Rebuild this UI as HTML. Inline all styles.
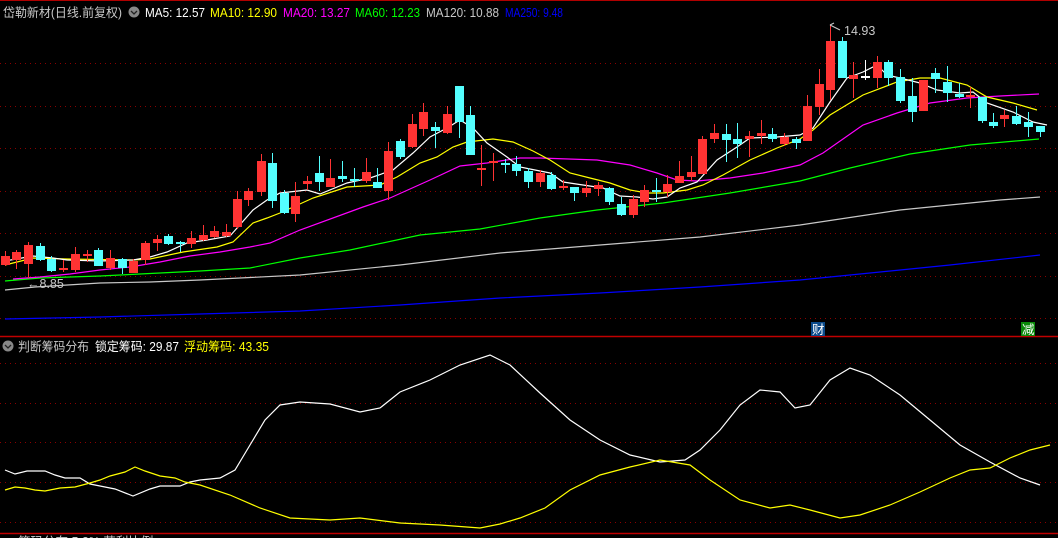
<!DOCTYPE html>
<html><head><meta charset="utf-8"><style>
html,body{margin:0;padding:0;background:#000;width:1058px;height:538px;overflow:hidden}
svg{display:block}
text{font-family:"Liberation Sans","Noto Sans CJK SC",sans-serif;font-size:12.5px}
.r{fill:#ff3333;stroke:#ff3333}
.c{fill:#54ffff;stroke:#54ffff}
.w{fill:#fff;stroke:#fff}
.g{stroke:#8a0000;stroke-dasharray:1 4;stroke-width:1}
polyline{fill:none;stroke-width:1.2}
</style></head><body>
<svg width="1058" height="538" viewBox="0 0 1058 538" xmlns="http://www.w3.org/2000/svg">
<rect width="1058" height="538" fill="#000"/>
<line x1="0" y1="0.5" x2="1058" y2="0.5" stroke="#b00000"/>
<line x1="0" y1="336.5" x2="1058" y2="336.5" stroke="#c00000" stroke-width="1.5"/>
<line x1="0" y1="533.5" x2="1058" y2="533.5" stroke="#c00000" stroke-width="1.5"/>
<g>
<line class="g" x1="0" y1="63.5" x2="1058" y2="63.5"/><line class="g" x1="0" y1="106.5" x2="1058" y2="106.5"/>
<line class="g" x1="0" y1="148.5" x2="1058" y2="148.5"/><line class="g" x1="0" y1="191.5" x2="1058" y2="191.5"/>
<line class="g" x1="0" y1="233.5" x2="1058" y2="233.5"/><line class="g" x1="0" y1="276.5" x2="1058" y2="276.5"/>
<line class="g" x1="0" y1="318.5" x2="1058" y2="318.5"/>
<line class="g" x1="0" y1="363.5" x2="1058" y2="363.5"/><line class="g" x1="0" y1="403.5" x2="1058" y2="403.5"/>
<line class="g" x1="0" y1="442.5" x2="1058" y2="442.5"/><line class="g" x1="0" y1="482.5" x2="1058" y2="482.5"/>
<line class="g" x1="0" y1="522.5" x2="1058" y2="522.5"/>
</g>
<polyline stroke="#0000ff" points="5,319 100,317 200,314 300,311 400,305 500,298 600,293 700,287 800,280 850,275 950,265 1040,255"/>
<polyline stroke="#c8c8c8" points="5,290 35,287 100,283 150,282 200,280 300,275 400,265 500,253 600,245 700,237 800,225 900,210 1000,200 1040,197"/>
<polyline stroke="#00ff00" points="5,281 40,278 70,277 100,276 140,274 200,271 250,268 300,258 350,250 420,235 480,229 540,218 597,210 663,203 730,193 800,181 850,168 910,154 970,145 1039,139"/>
<polyline stroke="#ff00ff" points="13,279 40,277 70,274 100,270 130,267 160,262 190,256 220,252 250,247 270,243 300,230 363,207 390,198 430,180 460,166 487,163 520,158 540,158 597,160 630,165 657,173 677,180 697,181 730,178 763,173 800,165 823,153 863,125 897,113 930,103 967,98 1000,96 1039,94"/>
<polyline stroke="#ffff00" points="5,265 33,258 67,259 133,260 150,259 183,252 217,247 233,242 253,223 267,218 280,213 313,198 347,187 380,185 397,177 420,163 437,157 453,147 467,142 493,139 513,142 533,151 550,160 570,173 590,178 610,183 630,190 647,193 663,193 687,190 703,185 723,175 750,160 777,148 800,139 813,130 830,115 863,95 897,82 920,78 940,78 967,85 987,97 1013,103 1037,110"/>
<polyline stroke="#ffffff" points="5,261 33,256 53,258 67,260 100,261 133,260 150,257 167,252 187,243 207,240 230,236 253,210 267,200 280,193 307,190 320,194 347,183 370,178 393,170 413,153 430,137 447,128 460,120 473,128 487,143 507,157 520,167 530,169 550,173 563,182 583,185 603,188 620,196 637,197 653,199 667,197 680,188 697,182 717,160 737,147 750,138 777,137 800,135 813,128 830,102 847,78 863,72 877,65 887,75 900,78 920,83 937,90 960,93 973,92 987,103 1013,112 1033,122 1047,125"/>
<g stroke-width="1">
<line class="r" x1="5.5" y1="251" x2="5.5" y2="266"/><rect class="r" x="1.5" y="256.5" width="8" height="8"/>
<line class="r" x1="16.5" y1="250" x2="16.5" y2="269"/><rect class="r" x="12.5" y="252.5" width="8" height="7"/>
<line class="r" x1="28.5" y1="242" x2="28.5" y2="278"/><rect class="r" x="24.5" y="245.5" width="8" height="18"/>
<line class="c" x1="40.5" y1="243" x2="40.5" y2="261"/><rect class="c" x="36.5" y="246.5" width="8" height="13"/>
<line class="c" x1="51.5" y1="256" x2="51.5" y2="272"/><rect class="c" x="47.5" y="259.5" width="8" height="11"/>
<line class="r" x1="63.5" y1="260" x2="63.5" y2="272"/><rect class="r" x="59.5" y="268.5" width="8" height="1"/>
<line class="r" x1="75.5" y1="247" x2="75.5" y2="272"/><rect class="r" x="71.5" y="254.5" width="8" height="15"/>
<line class="r" x1="87.5" y1="250" x2="87.5" y2="262"/><rect class="r" x="83.5" y="254.5" width="8" height="1"/>
<line class="c" x1="98.5" y1="248" x2="98.5" y2="266"/><rect class="c" x="94.5" y="250.5" width="8" height="15"/>
<line class="r" x1="110.5" y1="250" x2="110.5" y2="270"/><rect class="r" x="106.5" y="258.5" width="8" height="9"/>
<line class="c" x1="122.5" y1="258" x2="122.5" y2="274"/><rect class="c" x="118.5" y="259.5" width="8" height="8"/>
<line class="r" x1="133.5" y1="259" x2="133.5" y2="273"/><rect class="r" x="129.5" y="261.5" width="8" height="11"/>
<line class="r" x1="145.5" y1="241" x2="145.5" y2="265"/><rect class="r" x="141.5" y="243.5" width="8" height="16"/>
<line class="r" x1="157.5" y1="235" x2="157.5" y2="251"/><rect class="r" x="153.5" y="239.5" width="8" height="3"/>
<line class="c" x1="168.5" y1="234" x2="168.5" y2="245"/><rect class="c" x="164.5" y="236.5" width="8" height="7"/>
<line class="c" x1="180.5" y1="241" x2="180.5" y2="252"/><rect class="c" x="176.5" y="242.5" width="8" height="1"/>
<line class="r" x1="191.5" y1="231" x2="191.5" y2="248"/><rect class="r" x="187.5" y="238.5" width="8" height="5"/>
<line class="r" x1="203.5" y1="225" x2="203.5" y2="241"/><rect class="r" x="199.5" y="235.5" width="8" height="4"/>
<line class="r" x1="214.5" y1="226" x2="214.5" y2="238"/><rect class="r" x="210.5" y="231.5" width="8" height="5"/>
<line class="r" x1="226.5" y1="224" x2="226.5" y2="237"/><rect class="r" x="222.5" y="232.5" width="8" height="3"/>
<line class="r" x1="237.5" y1="191" x2="237.5" y2="229"/><rect class="r" x="233.5" y="199.5" width="8" height="27"/>
<line class="r" x1="248.5" y1="188" x2="248.5" y2="206"/><rect class="r" x="244.5" y="191.5" width="8" height="8"/>
<line class="r" x1="261.5" y1="154" x2="261.5" y2="196"/><rect class="r" x="257.5" y="161.5" width="8" height="30"/>
<line class="c" x1="272.5" y1="153" x2="272.5" y2="208"/><rect class="c" x="268.5" y="163.5" width="8" height="37"/>
<line class="c" x1="284.5" y1="190" x2="284.5" y2="214"/><rect class="c" x="280.5" y="193.5" width="8" height="19"/>
<line class="r" x1="295.5" y1="182" x2="295.5" y2="222"/><rect class="r" x="291.5" y="196.5" width="8" height="17"/>
<line class="r" x1="307.5" y1="176" x2="307.5" y2="190"/><rect class="r" x="303.5" y="181.5" width="8" height="2"/>
<line class="c" x1="319.5" y1="156" x2="319.5" y2="191"/><rect class="c" x="315.5" y="173.5" width="8" height="8"/>
<line class="r" x1="330.5" y1="159" x2="330.5" y2="187"/><rect class="r" x="326.5" y="178.5" width="8" height="8"/>
<line class="c" x1="342.5" y1="161" x2="342.5" y2="182"/><rect class="c" x="338.5" y="176.5" width="8" height="2"/>
<line class="c" x1="354.5" y1="168" x2="354.5" y2="187"/><rect class="c" x="350.5" y="179.5" width="8" height="1"/>
<line class="r" x1="366.5" y1="158" x2="366.5" y2="183"/><rect class="r" x="362.5" y="172.5" width="8" height="8"/>
<line class="c" x1="377.5" y1="168" x2="377.5" y2="188"/><rect class="c" x="373.5" y="182.5" width="8" height="5"/>
<line class="r" x1="388.5" y1="142" x2="388.5" y2="200"/><rect class="r" x="384.5" y="151.5" width="8" height="39"/>
<line class="c" x1="400.5" y1="139" x2="400.5" y2="159"/><rect class="c" x="396.5" y="141.5" width="8" height="15"/>
<line class="r" x1="412.5" y1="114" x2="412.5" y2="148"/><rect class="r" x="408.5" y="124.5" width="8" height="22"/>
<line class="r" x1="423.5" y1="103" x2="423.5" y2="136"/><rect class="r" x="419.5" y="112.5" width="8" height="16"/>
<line class="c" x1="435.5" y1="122" x2="435.5" y2="148"/><rect class="c" x="431.5" y="127.5" width="8" height="3"/>
<line class="r" x1="447.5" y1="106" x2="447.5" y2="134"/><rect class="r" x="443.5" y="114.5" width="8" height="18"/>
<line class="c" x1="459.5" y1="86" x2="459.5" y2="138"/><rect class="c" x="455.5" y="86.5" width="8" height="35"/>
<line class="c" x1="470.5" y1="106" x2="470.5" y2="154"/><rect class="c" x="466.5" y="115.5" width="8" height="39"/>
<line class="r" x1="481.5" y1="145" x2="481.5" y2="186"/><rect class="r" x="477.5" y="168.5" width="8" height="1"/>
<line class="r" x1="493.5" y1="153" x2="493.5" y2="181"/><rect class="r" x="489.5" y="161.5" width="8" height="1"/>
<line class="c" x1="505.5" y1="159" x2="505.5" y2="173"/><rect class="c" x="501.5" y="163.5" width="8" height="1"/>
<line class="c" x1="516.5" y1="156" x2="516.5" y2="176"/><rect class="c" x="512.5" y="164.5" width="8" height="6"/>
<line class="c" x1="528.5" y1="168" x2="528.5" y2="188"/><rect class="c" x="524.5" y="171.5" width="8" height="10"/>
<line class="r" x1="540.5" y1="170" x2="540.5" y2="187"/><rect class="r" x="536.5" y="173.5" width="8" height="8"/>
<line class="c" x1="551.5" y1="172" x2="551.5" y2="190"/><rect class="c" x="547.5" y="175.5" width="8" height="13"/>
<line class="r" x1="563.5" y1="180" x2="563.5" y2="190"/><rect class="r" x="559.5" y="186.5" width="8" height="1"/>
<line class="c" x1="574.5" y1="187" x2="574.5" y2="201"/><rect class="c" x="570.5" y="187.5" width="8" height="5"/>
<line class="r" x1="586.5" y1="181" x2="586.5" y2="197"/><rect class="r" x="582.5" y="188.5" width="8" height="4"/>
<line class="r" x1="598.5" y1="182" x2="598.5" y2="196"/><rect class="r" x="594.5" y="185.5" width="8" height="3"/>
<line class="c" x1="609.5" y1="187" x2="609.5" y2="205"/><rect class="c" x="605.5" y="188.5" width="8" height="13"/>
<line class="c" x1="621.5" y1="197" x2="621.5" y2="216"/><rect class="c" x="617.5" y="204.5" width="8" height="10"/>
<line class="r" x1="633.5" y1="195" x2="633.5" y2="218"/><rect class="r" x="629.5" y="199.5" width="8" height="15"/>
<line class="r" x1="644.5" y1="185" x2="644.5" y2="207"/><rect class="r" x="640.5" y="190.5" width="8" height="11"/>
<line class="c" x1="656.5" y1="178" x2="656.5" y2="202"/><rect class="c" x="652.5" y="190.5" width="8" height="1"/>
<line class="r" x1="667.5" y1="175" x2="667.5" y2="197"/><rect class="r" x="663.5" y="184.5" width="8" height="7"/>
<line class="r" x1="679.5" y1="161" x2="679.5" y2="183"/><rect class="r" x="675.5" y="176.5" width="8" height="6"/>
<line class="r" x1="691.5" y1="156" x2="691.5" y2="181"/><rect class="r" x="687.5" y="172.5" width="8" height="4"/>
<line class="r" x1="702.5" y1="136" x2="702.5" y2="173"/><rect class="r" x="698.5" y="139.5" width="8" height="34"/>
<line class="r" x1="714.5" y1="124" x2="714.5" y2="143"/><rect class="r" x="710.5" y="133.5" width="8" height="5"/>
<line class="c" x1="726.5" y1="124" x2="726.5" y2="162"/><rect class="c" x="722.5" y="134.5" width="8" height="5"/>
<line class="c" x1="737.5" y1="123" x2="737.5" y2="158"/><rect class="c" x="733.5" y="139.5" width="8" height="4"/>
<line class="r" x1="749.5" y1="131" x2="749.5" y2="157"/><rect class="r" x="745.5" y="136.5" width="8" height="2"/>
<line class="r" x1="761.5" y1="120" x2="761.5" y2="144"/><rect class="r" x="757.5" y="133.5" width="8" height="2"/>
<line class="c" x1="772.5" y1="128" x2="772.5" y2="142"/><rect class="c" x="768.5" y="134.5" width="8" height="4"/>
<line class="r" x1="784.5" y1="133" x2="784.5" y2="146"/><rect class="r" x="780.5" y="137.5" width="8" height="6"/>
<line class="c" x1="796.5" y1="137" x2="796.5" y2="149"/><rect class="c" x="792.5" y="139.5" width="8" height="3"/>
<line class="r" x1="807.5" y1="95" x2="807.5" y2="140"/><rect class="r" x="803.5" y="106.5" width="8" height="34"/>
<line class="r" x1="819.5" y1="69" x2="819.5" y2="115"/><rect class="r" x="815.5" y="84.5" width="8" height="22"/>
<line class="r" x1="830.5" y1="25" x2="830.5" y2="100"/><rect class="r" x="826.5" y="41.5" width="8" height="48"/>
<line class="c" x1="842.5" y1="37" x2="842.5" y2="78"/><rect class="c" x="838.5" y="41.5" width="8" height="36"/>
<line class="r" x1="853.5" y1="62" x2="853.5" y2="98"/><rect class="r" x="849.5" y="75.5" width="8" height="3"/>
<line class="w" x1="865.5" y1="60" x2="865.5" y2="80"/><rect class="w" x="861.5" y="76.5" width="8" height="1"/>
<line class="r" x1="877.5" y1="56" x2="877.5" y2="88"/><rect class="r" x="873.5" y="62.5" width="8" height="15"/>
<line class="c" x1="888.5" y1="60" x2="888.5" y2="86"/><rect class="c" x="884.5" y="62.5" width="8" height="15"/>
<line class="c" x1="900.5" y1="69" x2="900.5" y2="103"/><rect class="c" x="896.5" y="77.5" width="8" height="23"/>
<line class="c" x1="912.5" y1="78" x2="912.5" y2="122"/><rect class="c" x="908.5" y="96.5" width="8" height="15"/>
<line class="r" x1="923.5" y1="80" x2="923.5" y2="111"/><rect class="r" x="919.5" y="80.5" width="8" height="30"/>
<line class="c" x1="935.5" y1="68" x2="935.5" y2="93"/><rect class="c" x="931.5" y="73.5" width="8" height="5"/>
<line class="c" x1="947.5" y1="66" x2="947.5" y2="102"/><rect class="c" x="943.5" y="82.5" width="8" height="10"/>
<line class="c" x1="959.5" y1="83" x2="959.5" y2="98"/><rect class="c" x="955.5" y="94.5" width="8" height="2"/>
<line class="r" x1="970.5" y1="87" x2="970.5" y2="108"/><rect class="r" x="966.5" y="95.5" width="8" height="1"/>
<line class="c" x1="982.5" y1="97" x2="982.5" y2="123"/><rect class="c" x="978.5" y="97.5" width="8" height="23"/>
<line class="c" x1="993.5" y1="113" x2="993.5" y2="128"/><rect class="c" x="989.5" y="122.5" width="8" height="3"/>
<line class="r" x1="1004.5" y1="110" x2="1004.5" y2="127"/><rect class="r" x="1000.5" y="115.5" width="8" height="3"/>
<line class="c" x1="1016.5" y1="106" x2="1016.5" y2="125"/><rect class="c" x="1012.5" y="116.5" width="8" height="7"/>
<line class="c" x1="1028.5" y1="112" x2="1028.5" y2="137"/><rect class="c" x="1024.5" y="122.5" width="8" height="4"/>
<line class="c" x1="1040.5" y1="126" x2="1040.5" y2="137"/><rect class="c" x="1036.5" y="126.5" width="8" height="5"/>
</g>
<text x="27" y="288" fill="#c8c8c8" font-size="12">←8.85</text>
<path d="M830 25 L834 23 M830 25 L840 30" stroke="#c8c8c8" fill="none"/>
<text x="844" y="35" fill="#c8c8c8" font-size="12">14.93</text>
<rect x="811" y="322" width="14" height="14" fill="#0a4a8a"/>
<text x="812" y="334" fill="#fff" font-size="12">财</text>
<rect x="1021" y="322" width="14" height="14" fill="#0a8a0a"/>
<text x="1022" y="334" fill="#fff" font-size="12">减</text>
<text x="3" y="17" fill="#c8c8c8" textLength="119" lengthAdjust="spacingAndGlyphs">岱勒新材(日线.前复权)</text>
<circle cx="134" cy="12" r="5.5" fill="#888"/><path d="M131 11 L134 14 L137 11" stroke="#222" fill="none" stroke-width="1.3"/>
<text x="145" y="17" fill="#ffffff" textLength="60" lengthAdjust="spacingAndGlyphs">MA5: 12.57</text>
<text x="210" y="17" fill="#ffff00" textLength="67" lengthAdjust="spacingAndGlyphs">MA10: 12.90</text>
<text x="283" y="17" fill="#ff00ff" textLength="67" lengthAdjust="spacingAndGlyphs">MA20: 13.27</text>
<text x="355" y="17" fill="#00ff00" textLength="65" lengthAdjust="spacingAndGlyphs">MA60: 12.23</text>
<text x="426" y="17" fill="#c8c8c8" textLength="73" lengthAdjust="spacingAndGlyphs">MA120: 10.88</text>
<text x="505" y="17" fill="#0000ff" textLength="58" lengthAdjust="spacingAndGlyphs">MA250: 9.48</text>
<circle cx="8" cy="346" r="5.5" fill="#888"/><path d="M5 345 L8 348 L11 345" stroke="#222" fill="none" stroke-width="1.3"/>
<text x="18" y="351" fill="#c8c8c8" textLength="71" lengthAdjust="spacingAndGlyphs">判断筹码分布</text>
<text x="95" y="351" fill="#ffffff" textLength="84" lengthAdjust="spacingAndGlyphs">锁定筹码: 29.87</text>
<text x="184" y="351" fill="#ffff00" textLength="85" lengthAdjust="spacingAndGlyphs">浮动筹码: 43.35</text>
<polyline stroke="#ffffff" points="5,470 15,474 27,471 45,471 55,475 65,478 80,478 90,484 100,486 115,489 133,496 150,489 160,486 180,486 190,482 200,480 220,478 235,470 250,445 265,420 280,405 300,402 330,404 360,412 380,408 400,392 430,380 460,365 490,355 510,365 540,393 570,420 600,440 630,455 660,462 685,460 700,450 720,430 740,405 760,390 780,392 795,408 810,405 830,380 850,368 870,375 900,395 930,420 960,445 990,462 1020,478 1040,485"/>
<polyline stroke="#ffff00" points="5,490 15,487 25,488 35,490 45,491 60,488 75,487 90,483 100,480 110,476 125,472 135,467 145,471 160,476 175,478 185,482 200,485 230,495 260,508 290,518 330,520 360,518 400,523 440,525 480,528 500,524 520,518 545,508 570,490 600,475 630,467 660,460 690,465 710,480 740,500 770,508 790,505 810,510 840,518 860,515 890,505 920,492 950,478 970,470 990,468 1010,458 1030,450 1050,445"/>
<circle cx="8" cy="544" r="5.5" fill="#888"/>
<text x="18" y="546" fill="#c8c8c8">筹码分布 5.2% 获利比例</text>
</svg>
</body></html>
